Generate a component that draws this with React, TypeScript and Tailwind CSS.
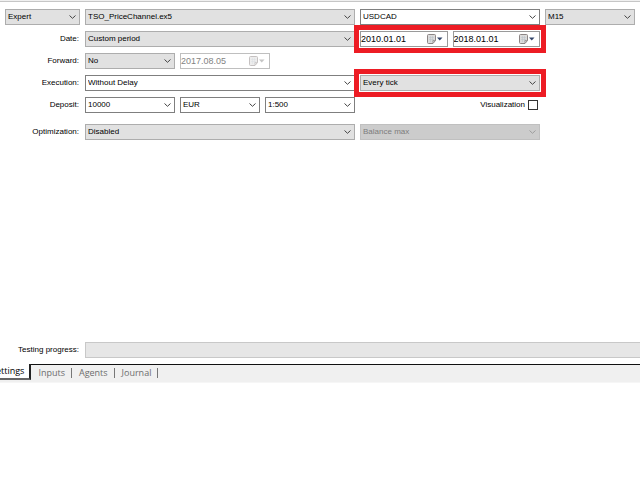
import React, { useState } from 'react'
import clsx from 'clsx'

interface ComboProps {
  label: string
  options: string[]
  id?: string
  editable?: boolean
  disabled?: boolean
}

const Combo: React.FC<ComboProps> = ({ label, options, id, editable, disabled }) => (
  <div className="relative h-4 min-w-0">
    <select
      id={id}
      aria-label={id ? undefined : label}
      disabled={disabled}
      className={clsx(
        'block h-4 w-full appearance-none border pl-[2px] pr-4 leading-[14px] opacity-100 outline-none',
        disabled && 'border-[#c0c0c0] bg-[#cccccc] text-[#7c7c7c]',
        !disabled && editable && 'border-[#7f7f7f] bg-white text-black',
        !disabled && !editable && 'border-[#adadad] bg-[#e1e1e1] text-black'
      )}
    >
      {options.map((option) => (
        <option key={option}>{option}</option>
      ))}
    </select>
    <svg
      viewBox="0 0 7 4"
      className={clsx(
        'pointer-events-none absolute right-1 top-[6px] h-1 w-[7px]',
        disabled ? 'text-[#9d9d9d]' : 'text-[#444444]'
      )}
      fill="none"
      stroke="currentColor"
    >
      <path d="M0.5 0.5 L3.5 3.3 L6.5 0.5" />
    </svg>
  </div>
)

interface DateBoxProps {
  label: string
  value: string
  disabled?: boolean
}

const DateBox: React.FC<DateBoxProps> = ({ label, value, disabled }) => (
  <div className="relative h-4 min-w-0">
    <input
      type="text"
      aria-label={label}
      defaultValue={value}
      disabled={disabled}
      className={clsx(
        'block h-4 w-full border bg-white pb-px pr-6 text-[9px] leading-[13px] outline-none',
        disabled ? 'border-[#bfbfbf] text-[#838383]' : 'border-[#9a9a9a] text-black'
      )}
    />
    <svg
      viewBox="0 0 16 10"
      className={clsx('pointer-events-none absolute right-[5px] top-[3px] h-[10px] w-4', disabled && 'opacity-50')}
    >
      <path d="M1.5 0.5 H7.5 Q8.5 0.5 8.5 1.5 V6.5 L6 9.5 H1.5 Q0.5 9.5 0.5 8.5 V1.5 Q0.5 0.5 1.5 0.5 Z" fill="#dcdcdc" stroke="#8c8585" />
      <path d="M2 3.5 H7 M2 5.5 H7 M3.5 2 V8 M5.5 2 V8" stroke="#b9c0c8" strokeWidth="0.5" />
      <path d="M6 9 V6.5 H8.5" fill="none" stroke="#8c8585" strokeWidth="0.7" />
      <path d="M10 3.5 H15.5 L12.75 6.5 Z" fill={disabled ? '#8c8c8c' : '#34466b'} />
    </svg>
  </div>
)

const Highlight: React.FC = () => (
  <div className="pointer-events-none absolute -inset-[6px] border-5 border-[#ed1c24]" />
)

const rowClass = 'grid grid-cols-[75px_minmax(0,3fr)_minmax(0,2fr)_minmax(0,1fr)] items-center gap-x-[5px]'
const labelClass = 'pr-px text-right leading-4'

const tabs = ['Settings', 'Inputs', 'Agents', 'Journal']

function App() {
  const [activeTab, setActiveTab] = useState('Settings')
  const [visualization, setVisualization] = useState(false)

  return (
    <div className="min-h-screen overflow-x-hidden bg-white font-['Liberation_Sans',Arial,sans-serif] text-[8px] text-black">
      <div className="h-[2px] border-b border-[#c6c6c6] bg-[#f0f0f0]" />

      <main>
        <div className="flex flex-col gap-[6px] px-[5px] pt-[7px]">
          <div className={rowClass}>
            <Combo label="Program type" options={['Expert', 'Indicator']} />
            <Combo label="Expert" options={['TSO_PriceChannel.ex5']} />
            <Combo label="Symbol" options={['USDCAD']} editable />
            <Combo label="Timeframe" options={['M15', 'M30', 'H1']} />
          </div>

          <div className={rowClass}>
            <label htmlFor="date" className={labelClass}>Date:</label>
            <Combo id="date" label="Date" options={['Custom period', 'Entire history']} />
            <div className="relative grid grid-cols-2 gap-[5px]">
              <DateBox label="Start date" value="2010.01.01" />
              <DateBox label="End date" value="2018.01.01" />
              <Highlight />
            </div>
          </div>

          <div className={rowClass}>
            <label htmlFor="forward" className={labelClass}>Forward:</label>
            <div className="grid grid-cols-[90px_90px] gap-[5px]">
              <Combo id="forward" label="Forward" options={['No', '1/2', '1/3', '1/4']} />
              <DateBox label="Forward date" value="2017.08.05" disabled />
            </div>
          </div>

          <div className={rowClass}>
            <label htmlFor="execution" className={labelClass}>Execution:</label>
            <Combo id="execution" label="Execution" options={['Without Delay', 'Random Delay']} editable />
            <div className="relative">
              <Combo label="Tick mode" options={['Every tick', 'Open prices only']} />
              <Highlight />
            </div>
          </div>

          <div className={rowClass}>
            <label htmlFor="deposit" className={labelClass}>Deposit:</label>
            <div className="grid grid-cols-[90px_80px_minmax(0,1fr)] gap-[5px]">
              <Combo id="deposit" label="Deposit" options={['10000', '50000']} editable />
              <Combo label="Currency" options={['EUR', 'USD']} editable />
              <Combo label="Leverage" options={['1:500', '1:100']} editable />
            </div>
            <label className="flex items-center justify-end gap-[3px] pr-[2px]">
              Visualization
              <input
                type="checkbox"
                checked={visualization}
                onChange={(e) => setVisualization(e.target.checked)}
                className="size-[10px] appearance-none border border-[#333333] bg-white checked:bg-[#333333]"
              />
            </label>
          </div>

          <div className={clsx(rowClass, 'pt-[5px]')}>
            <label htmlFor="optimization" className={labelClass}>Optimization:</label>
            <Combo id="optimization" label="Optimization" options={['Disabled', 'Slow complete']} />
            <Combo label="Criterion" options={['Balance max']} disabled />
          </div>
        </div>

        <div className="mt-[202px] flex items-center gap-[5px] pl-[5px]">
          <label htmlFor="progress" className="w-[75px] whitespace-nowrap pr-px text-right leading-4">Testing progress:</label>
          <progress
            id="progress"
            max={100}
            value={0}
            className="h-4 min-w-0 flex-1 appearance-none border border-r-0 border-[#c8c8c8] bg-[#e6e6e6] [&::-webkit-progress-bar]:bg-[#e6e6e6]"
          />
        </div>
      </main>

      <nav className="mt-[6px] flex h-[19px] items-start border-b border-[#f6f6f6] bg-[#f0f0f0] font-['Open_Sans','Noto_Sans',sans-serif] text-[9px]">
        <div className="flex h-4 w-full">
          {tabs.map((tab) =>
            tab === activeTab ? (
              <button
                key={tab}
                onClick={() => setActiveTab(tab)}
                className="-ml-[13px] h-4 border-b-2 border-r-2 border-b-[#666666] border-r-[#222222] bg-white pl-1 pr-[5px] leading-[14px]"
              >
                {tab}
              </button>
            ) : (
              <button
                key={tab}
                onClick={() => setActiveTab(tab)}
                className="flex h-4 items-center border-t border-[#111111] pl-[7px] leading-[14px] text-[#6d6d6d]"
              >
                {tab}
                <span className="ml-[6px] h-[10px] w-px bg-[#777777]" />
              </button>
            )
          )}
          <div className="flex-1 border-t border-[#111111]" />
        </div>
      </nav>
    </div>
  )
}

export default App
